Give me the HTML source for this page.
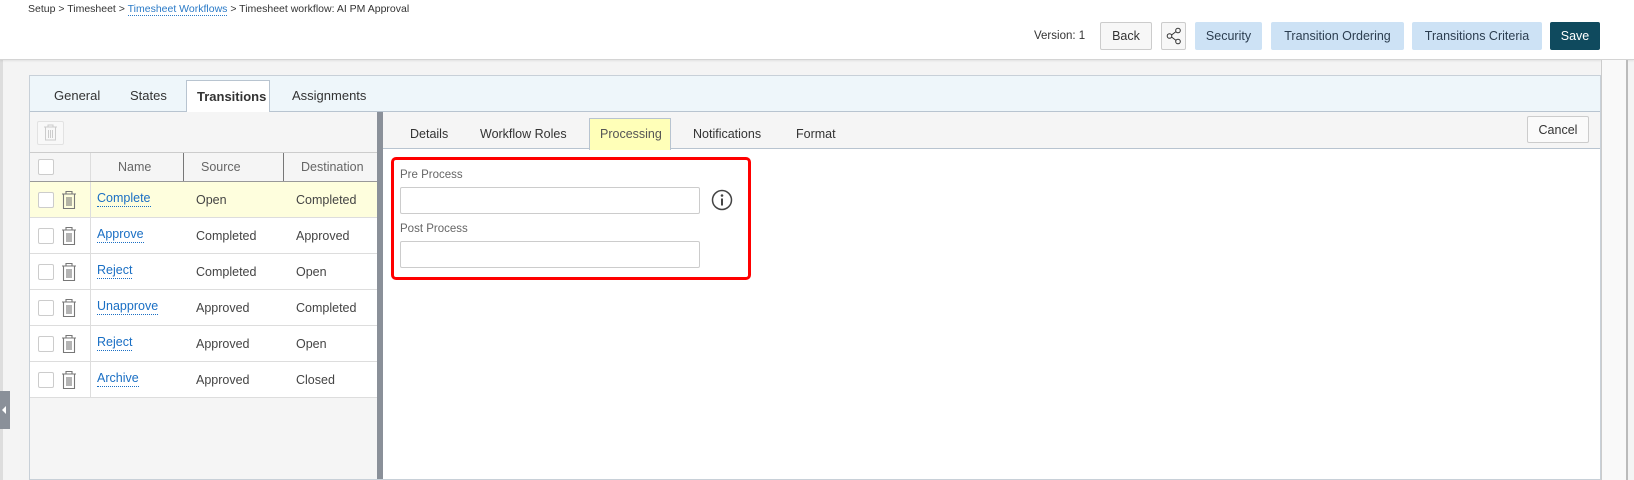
<!DOCTYPE html>
<html><head><style>
*{box-sizing:border-box;margin:0;padding:0}
body{width:1634px;height:480px;overflow:hidden;background:#f4f4f4;font-family:"Liberation Sans",sans-serif;color:#333;position:relative}
.a{position:absolute}
.top{left:0;top:0;width:1634px;height:60px;background:#fff;border-bottom:1px solid #d4d4d4;box-shadow:0 1px 2px rgba(0,0,0,.08)}
.bc{left:28px;top:3px;font-size:10.5px;color:#333}
.bc span{color:#2a7ac7;border-bottom:1px dotted #2a7ac7}
.btn{position:absolute;top:22px;height:28px;font-size:12.5px;display:flex;align-items:center;justify-content:center;border-radius:2px}
.b1{background:#f7f7f7;border:1px solid #ccc;color:#333}
.b2{background:#cde2f5;color:#2c3e50}
.b3{background:#0f4a5e;color:#fff}
.panel{left:29px;top:75px;width:1572px;height:405px;border:1px solid #c8d0d8;background:#f5f5f5}
.tabbar{left:30px;top:76px;width:1570px;height:36px;background:#eef6fa;border-bottom:1px solid #b8c4d0}
.tab{position:absolute;top:88px;font-size:13px;color:#333}
.left{left:30px;top:112px;width:347px;height:367px;background:#f5f5f5}
.split{left:377px;top:112px;width:6px;height:367px;background:#8a9099}
.right{left:383px;top:112px;width:1217px;height:367px;background:#fff}
.sub{left:383px;top:112px;width:1217px;height:37px;background:#f5f5f5;border-bottom:1px solid #b8c4d0}
.st{position:absolute;top:127px;font-size:12.5px;color:#333}
.hdr{left:30px;top:152px;width:347px;height:30px;border-top:1px solid #ccc;border-bottom:1px solid #999;background:#f5f5f5}
.row{position:absolute;left:30px;width:347px;height:36px;border-bottom:1px solid #ddd;background:#fff;font-size:12.5px}
.cb{position:absolute;left:8px;width:16px;height:16px;border:1px solid #ccc;background:#fff;border-radius:2px}
.lnk{position:absolute;left:67px;color:#1a6fc4;border-bottom:1px dotted #1a6fc4;line-height:15px;top:9px}
.c2{position:absolute;left:166px;color:#444;top:11px;line-height:15px}
.c3{position:absolute;left:266px;color:#444;top:11px;line-height:15px}
.inp{position:absolute;left:400px;width:300px;height:27px;border:1px solid #ccc;border-radius:2px;background:#fff}
.lbl{position:absolute;left:400px;font-size:11.5px;color:#666}
</style></head><body>
<div class="a" style="left:0;top:0;width:3px;height:480px;background:#ddd"></div>
<div class="a top"></div>
<div class="a bc">Setup &gt; Timesheet &gt; <span>Timesheet Workflows</span> &gt; Timesheet workflow: AI PM Approval</div>
<div class="a" style="left:1034px;top:29px;font-size:11.5px;line-height:14px">Version: 1</div>
<div class="btn b1" style="left:1100px;width:52px">Back</div>
<div class="btn b1" style="left:1161px;width:25px"><svg width="16" height="18" viewBox="0 0 16 18"><circle cx="3.5" cy="9" r="2.3" fill="none" stroke="#333"/><circle cx="12" cy="3.5" r="2.3" fill="none" stroke="#333"/><circle cx="12" cy="14.5" r="2.3" fill="none" stroke="#333"/><path d="M5.5 8 L10 4.6 M5.5 10 L10 13.4" stroke="#333"/></svg></div>
<div class="btn b2" style="left:1195px;width:67px">Security</div>
<div class="btn b2" style="left:1271px;width:133px">Transition Ordering</div>
<div class="btn b2" style="left:1412px;width:130px">Transitions Criteria</div>
<div class="btn b3" style="left:1550px;width:50px">Save</div>
<div class="a" style="left:1601px;top:60px;width:27px;height:420px;background:#f9f9f9;border-left:1px solid #ccc;border-right:2px solid #bbb"></div>
<div class="a panel"></div>
<div class="a tabbar"></div>
<div class="tab" style="left:54px">General</div>
<div class="tab" style="left:130px">States</div>
<div class="a" style="left:186px;top:80px;width:84px;height:33px;background:#fff;border:1px solid #b8c4d0;border-bottom:none"></div>
<div class="tab" style="left:197px;font-weight:bold;color:#333;top:89px">Transitions</div>
<div class="tab" style="left:292px">Assignments</div>
<div class="a left"></div>
<div class="a" style="left:37px;top:121px;width:27px;height:24px;border:1px solid #e2e2e2;border-radius:2px;background:#f8f8f8"><svg width="25" height="22" viewBox="0 0 25 22"><path d="M6 5h13M10 5V3h5v2M7.5 5v13h10V5M10.5 8v8M12.5 8v8M14.5 8v8" fill="none" stroke="#ccc"/></svg></div>
<div class="a hdr"></div>
<div class="a" style="left:38px;top:159px;width:16px;height:16px;border:1px solid #ccc;background:#fff;border-radius:2px"></div>
<div class="a" style="left:90px;top:153px;width:1px;height:28px;background:#ddd"></div>
<div class="a" style="left:183px;top:153px;width:1px;height:28px;background:#777"></div>
<div class="a" style="left:283px;top:153px;width:1px;height:28px;background:#777"></div>
<div class="a" style="left:118px;top:160px;font-size:12.5px;color:#666">Name</div>
<div class="a" style="left:201px;top:160px;font-size:12.5px;color:#666">Source</div>
<div class="a" style="left:301px;top:160px;font-size:12.5px;color:#666">Destination</div>

<div class="row" style="top:182px;background:#fefedd"><div class="cb" style="top:10px"></div><svg class="a" style="left:31px;top:8px" width="16" height="20" viewBox="0 0 16 20"><path d="M1 4h14M5 4V1.5h6V4M2.5 4v14.5h11V4M6 7v9M8 7v9M10 7v9" fill="none" stroke="#777" stroke-width="1.1"/></svg><div class="a" style="left:60px;top:0;width:1px;height:36px;background:#ddd"></div><div class="lnk">Complete</div><div class="c2">Open</div><div class="c3">Completed</div></div>
<div class="row" style="top:218px"><div class="cb" style="top:10px"></div><svg class="a" style="left:31px;top:8px" width="16" height="20" viewBox="0 0 16 20"><path d="M1 4h14M5 4V1.5h6V4M2.5 4v14.5h11V4M6 7v9M8 7v9M10 7v9" fill="none" stroke="#777" stroke-width="1.1"/></svg><div class="a" style="left:60px;top:0;width:1px;height:36px;background:#ddd"></div><div class="lnk">Approve</div><div class="c2">Completed</div><div class="c3">Approved</div></div>
<div class="row" style="top:254px"><div class="cb" style="top:10px"></div><svg class="a" style="left:31px;top:8px" width="16" height="20" viewBox="0 0 16 20"><path d="M1 4h14M5 4V1.5h6V4M2.5 4v14.5h11V4M6 7v9M8 7v9M10 7v9" fill="none" stroke="#777" stroke-width="1.1"/></svg><div class="a" style="left:60px;top:0;width:1px;height:36px;background:#ddd"></div><div class="lnk">Reject</div><div class="c2">Completed</div><div class="c3">Open</div></div>
<div class="row" style="top:290px"><div class="cb" style="top:10px"></div><svg class="a" style="left:31px;top:8px" width="16" height="20" viewBox="0 0 16 20"><path d="M1 4h14M5 4V1.5h6V4M2.5 4v14.5h11V4M6 7v9M8 7v9M10 7v9" fill="none" stroke="#777" stroke-width="1.1"/></svg><div class="a" style="left:60px;top:0;width:1px;height:36px;background:#ddd"></div><div class="lnk">Unapprove</div><div class="c2">Approved</div><div class="c3">Completed</div></div>
<div class="row" style="top:326px"><div class="cb" style="top:10px"></div><svg class="a" style="left:31px;top:8px" width="16" height="20" viewBox="0 0 16 20"><path d="M1 4h14M5 4V1.5h6V4M2.5 4v14.5h11V4M6 7v9M8 7v9M10 7v9" fill="none" stroke="#777" stroke-width="1.1"/></svg><div class="a" style="left:60px;top:0;width:1px;height:36px;background:#ddd"></div><div class="lnk">Reject</div><div class="c2">Approved</div><div class="c3">Open</div></div>
<div class="row" style="top:362px"><div class="cb" style="top:10px"></div><svg class="a" style="left:31px;top:8px" width="16" height="20" viewBox="0 0 16 20"><path d="M1 4h14M5 4V1.5h6V4M2.5 4v14.5h11V4M6 7v9M8 7v9M10 7v9" fill="none" stroke="#777" stroke-width="1.1"/></svg><div class="a" style="left:60px;top:0;width:1px;height:36px;background:#ddd"></div><div class="lnk">Archive</div><div class="c2">Approved</div><div class="c3">Closed</div></div>

<div class="a split"></div>
<div class="a right"></div>
<div class="a sub"></div>
<div class="st" style="left:410px">Details</div>
<div class="st" style="left:480px">Workflow Roles</div>
<div class="a" style="left:589px;top:118px;width:82px;height:32px;background:#ffffb8;border:1px solid #b8c4d0;border-bottom:none"></div>
<div class="st" style="left:600px;color:#555">Processing</div>
<div class="st" style="left:693px">Notifications</div>
<div class="st" style="left:796px">Format</div>
<div class="btn b1" style="left:1527px;top:116px;width:62px;height:27px;background:#fafafa">Cancel</div>
<div class="a" style="left:391px;top:157px;width:360px;height:123px;border:3px solid #f00;border-radius:5px"></div>
<div class="lbl" style="top:169px">Pre Process</div>
<div class="inp" style="top:187px"></div>
<svg class="a" style="left:711px;top:189px" width="22" height="22" viewBox="0 0 22 22"><circle cx="11" cy="11" r="9.5" fill="none" stroke="#444" stroke-width="1.5"/><circle cx="11" cy="6.5" r="1.3" fill="#444"/><path d="M11 9.5v7" stroke="#444" stroke-width="2"/></svg>
<div class="lbl" style="top:223px">Post Process</div>
<div class="inp" style="top:241px"></div>
<div class="a" style="left:0;top:391px;width:10px;height:38px;background:#8a9099"></div>
<div class="a" style="left:2px;top:406px;width:0;height:0;border-top:4px solid transparent;border-bottom:4px solid transparent;border-right:4px solid #fff"></div>
</body></html>
